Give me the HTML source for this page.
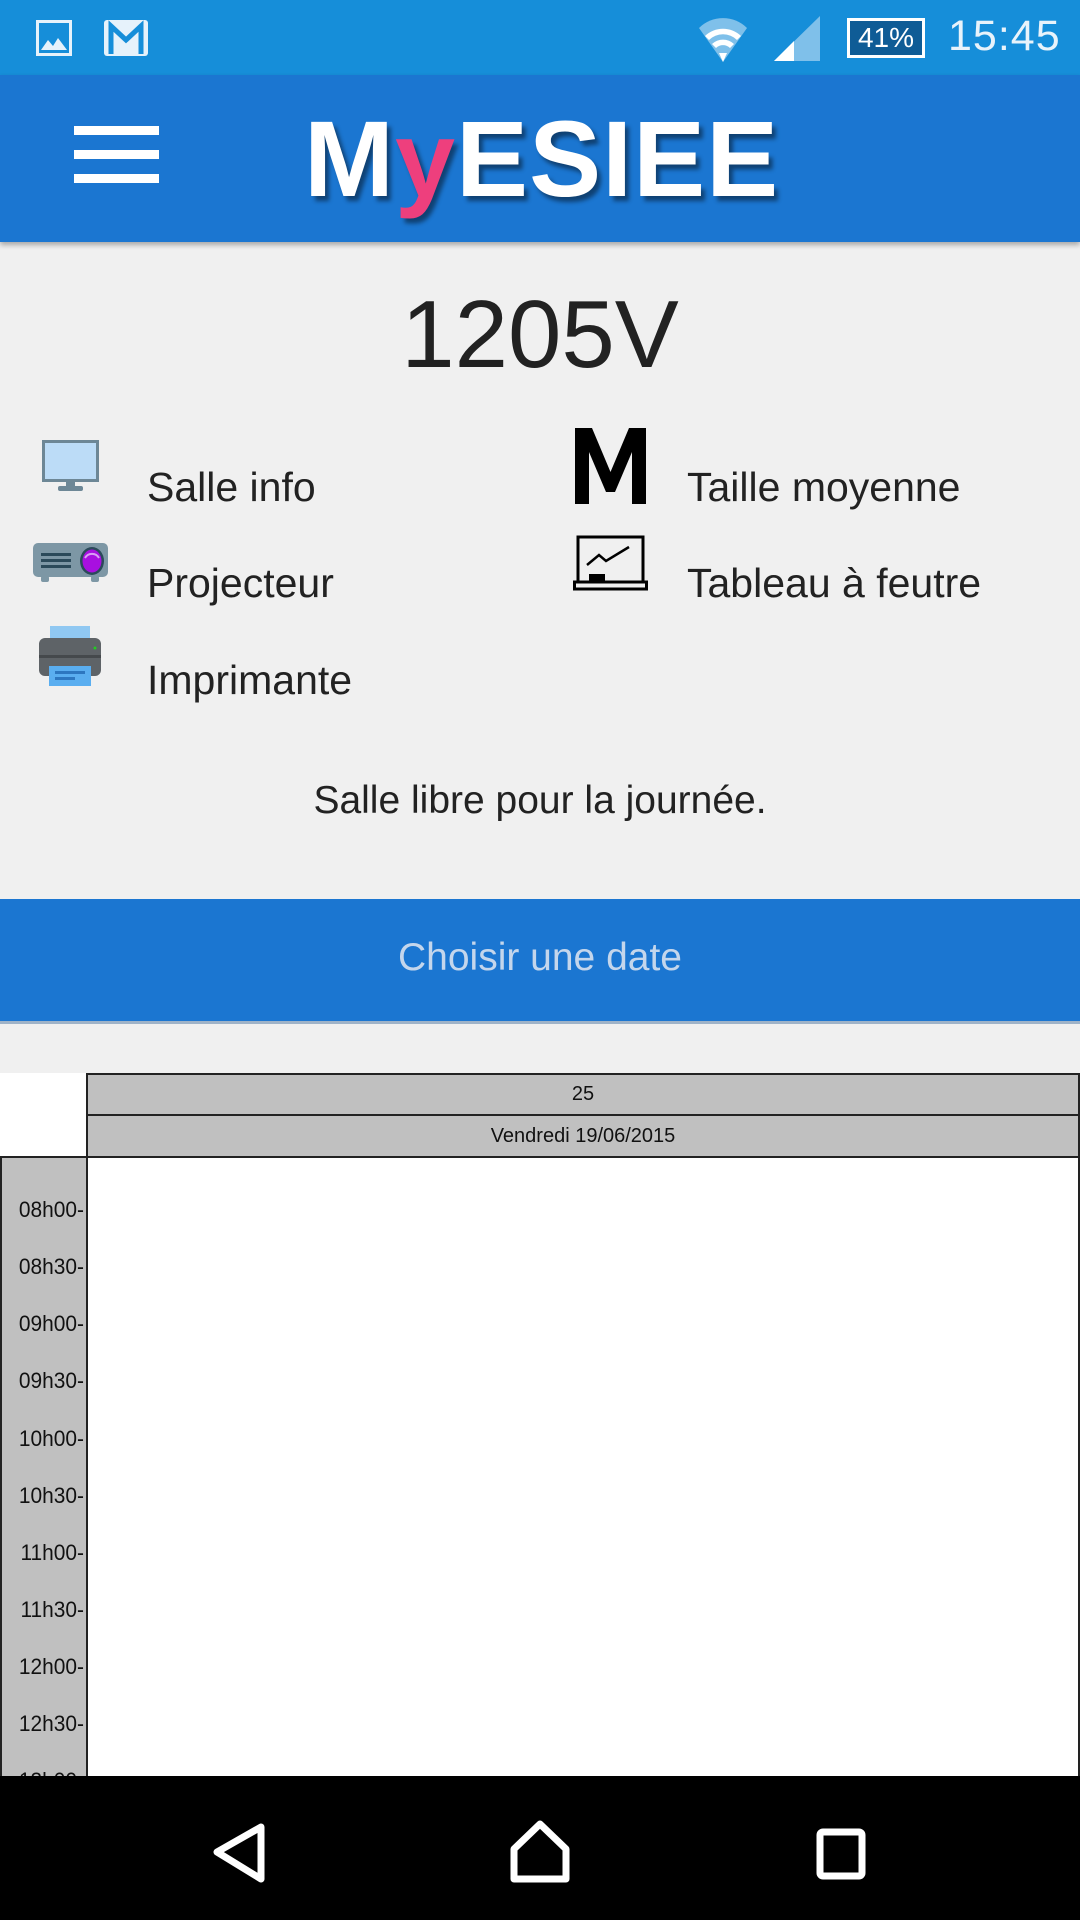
<!DOCTYPE html>
<html><head><meta charset="utf-8"><style>
*{margin:0;padding:0;box-sizing:border-box}
body{width:1080px;height:1920px;overflow:hidden;background:#f0f0f0;font-family:"Liberation Sans",sans-serif;position:relative}
.abs{position:absolute}
.t{font-size:41px;color:#222}
.time{position:absolute;left:0;width:84px;text-align:right;font-family:"Liberation Sans",sans-serif;font-size:22px;color:#111;transform:scaleX(0.95);transform-origin:right}
</style></head><body>
<div class="abs" style="left:0;top:0;width:1080px;height:75px;background:#168ed9"></div>
<svg class="abs" style="top:20px;left:36px" width="36" height="36" viewBox="0 0 36 36"><rect x="1.5" y="1.5" width="33" height="33" fill="none" stroke="#e6f2fb" stroke-width="3"/><path d="M5 30 L12 20 L17 26 L22 18 L31 30Z" fill="#e6f2fb"/></svg>
<svg class="abs" style="left:104px;top:20px" width="44" height="36" viewBox="0 0 44 36"><rect x="0" y="0" width="44" height="36" rx="3" fill="#e6f2fb"/><path d="M7 34 V6 L22 20 L37 6 V34" fill="none" stroke="#168ed9" stroke-width="5"/></svg>
<svg class="abs" style="left:697px;top:16px" width="52" height="48" viewBox="0 0 52 48"><path d="M2 12 A34 34 0 0 1 50 12 L26 46Z" fill="#7fc0ea"/><path d="M8 20 A26 26 0 0 1 44 20 L40 24 A20 20 0 0 0 12 24Z M15 28 A16 16 0 0 1 37 28 L33 32 A10 10 0 0 0 19 32Z" fill="#fff"/><path d="M22 37 L30 37 L26 46Z" fill="#fff"/></svg>
<svg class="abs" style="left:774px;top:16px" width="46" height="46" viewBox="0 0 46 46"><path d="M46 0 V45 H0Z" fill="#7fc0ea"/><path d="M0 45 L20 25 V45Z" fill="#fff"/></svg>
<div class="abs" style="left:847px;top:18px;width:78px;height:40px;border:3px solid #fff;background:#0f5c96;color:#fff;font-size:28px;text-align:center;line-height:34px">41%</div>
<div class="abs" style="left:948px;top:12px;font-size:43px;color:#e8f3fb;letter-spacing:1px">15:45</div>

<div class="abs" style="left:0;top:75px;width:1080px;height:167px;background:#1b76d1;box-shadow:0 3px 5px rgba(0,0,0,.3)"></div>
<div class="abs" style="left:74px;top:126px;width:85px;height:9px;background:#fff"></div>
<div class="abs" style="left:74px;top:150px;width:85px;height:9px;background:#fff"></div>
<div class="abs" style="left:74px;top:174px;width:85px;height:9px;background:#fff"></div>
<div class="abs" style="left:304px;top:96px;font-size:108px;font-weight:bold;color:#fff;letter-spacing:1px;text-shadow:4px 5px 4px rgba(0,0,0,.45)">M<span style="color:#ee3f7d">y</span>ESIEE</div>

<div class="abs" style="left:0;top:280px;width:1080px;text-align:center;font-size:96px;color:#222">1205V</div>

<svg class="abs" style="left:42px;top:440px" width="57" height="52" viewBox="0 0 57 52"><rect x="1.5" y="1.5" width="54" height="39" fill="#bcdcf7" stroke="#6d8796" stroke-width="3"/><rect x="24" y="40" width="9" height="6" fill="#6d8796"/><rect x="16" y="46" width="25" height="5" rx="2" fill="#6d8796"/></svg>
<svg class="abs" style="left:33px;top:543px" width="75" height="40" viewBox="0 0 75 40"><rect x="0" y="0" width="75" height="34" rx="5" fill="#7d97a5"/><rect x="8" y="33" width="8" height="6" rx="2" fill="#7d97a5"/><rect x="58" y="33" width="8" height="6" rx="2" fill="#7d97a5"/><ellipse cx="59" cy="18" rx="12" ry="14" fill="#2b4a5a"/><ellipse cx="59" cy="18" rx="9.5" ry="11.5" fill="#a810e0"/><path d="M52 15 A8 8 0 0 1 66 15" fill="none" stroke="#d9a0f5" stroke-width="2"/><g fill="#2b4a5a"><rect x="8" y="10" width="30" height="3"/><rect x="8" y="16" width="30" height="3"/><rect x="8" y="22" width="30" height="3"/></g></svg>
<svg class="abs" style="left:39px;top:626px" width="62" height="60" viewBox="0 0 62 60"><rect x="11" y="0" width="40" height="14" fill="#90c8f2"/><rect x="0" y="12" width="62" height="38" rx="6" fill="#5e6367"/><rect x="0" y="29" width="62" height="3" fill="#45494c"/><rect x="10" y="40" width="42" height="20" fill="#5aaef0"/><rect x="16" y="45" width="30" height="3" fill="#2d77c0"/><rect x="16" y="51" width="20" height="3" fill="#2d77c0"/><circle cx="56" cy="22" r="1.5" fill="#2c2"/></svg>
<div class="abs t" style="left:147px;top:464px">Salle info</div>
<div class="abs t" style="left:147px;top:560px">Projecteur</div>
<div class="abs t" style="left:147px;top:657px">Imprimante</div>

<svg class="abs" style="left:575px;top:428px" width="71" height="76" viewBox="0 0 71 76"><path d="M0 76 V0 H17 L35.5 44 L54 0 H71 V76 H57 V24 L40 64 H31 L14 24 V76Z" fill="#000"/></svg>
<svg class="abs" style="left:573px;top:535px" width="75" height="58" viewBox="0 0 75 58"><rect x="5" y="2" width="65" height="45" fill="none" stroke="#000" stroke-width="3"/><rect x="1.5" y="47" width="72" height="7" fill="none" stroke="#000" stroke-width="3"/><path d="M14 30 L26 20 L33 26 L56 12" fill="none" stroke="#000" stroke-width="2.5"/><rect x="16" y="39" width="16" height="8" fill="#000"/></svg>
<div class="abs t" style="left:687px;top:464px">Taille moyenne</div>
<div class="abs t" style="left:687px;top:560px">Tableau à feutre</div>

<div class="abs" style="left:0;top:779px;width:1080px;text-align:center;font-size:39px;color:#222">Salle libre pour la journée.</div>

<div class="abs" style="left:0;top:899px;width:1080px;height:125px;background:#1b76d1;border-bottom:3px solid #9fb3c8"></div>
<div class="abs" style="left:0;top:936px;width:1080px;text-align:center;font-size:39px;color:#c4d6ec">Choisir une date</div>

<div class="abs" style="left:0;top:1073px;width:1080px;height:703px;background:#fff"></div>
<div class="abs" style="left:86px;top:1073px;width:994px;height:43px;background:#c0c0c0;border:2px solid #222;text-align:center;font-size:20px;line-height:38px;color:#111">25</div>
<div class="abs" style="left:86px;top:1114px;width:994px;height:44px;background:#c0c0c0;border:2px solid #222;text-align:center;font-size:20px;line-height:40px;color:#111">Vendredi 19/06/2015</div>
<div class="abs" style="left:0;top:1156px;width:88px;height:640px;background:#c0c0c0;border:2px solid #222;border-bottom:none"></div>
<div class="abs" style="left:88px;top:1158px;width:992px;height:620px;background:#fff;border-right:2px solid #222"></div>
<div class="time" style="top:1197px">08h00-</div>
<div class="time" style="top:1254px">08h30-</div>
<div class="time" style="top:1311px">09h00-</div>
<div class="time" style="top:1368px">09h30-</div>
<div class="time" style="top:1426px">10h00-</div>
<div class="time" style="top:1483px">10h30-</div>
<div class="time" style="top:1540px">11h00-</div>
<div class="time" style="top:1597px">11h30-</div>
<div class="time" style="top:1654px">12h00-</div>
<div class="time" style="top:1711px">12h30-</div>
<div class="time" style="top:1768px">13h00-</div>

<div class="abs" style="left:0;top:1776px;width:1080px;height:144px;background:#000"></div>
<svg class="abs" style="left:0;top:1776px" width="1080" height="144" viewBox="0 0 1080 144"><path d="M261 51 L217 76 L261 103Z" fill="none" stroke="#fff" stroke-width="7" stroke-linejoin="round"/><path d="M540 48 L566 73 V103 H514 V73Z" fill="none" stroke="#fff" stroke-width="7" stroke-linejoin="round"/><rect x="820" y="56" width="42" height="44" rx="3" fill="none" stroke="#fff" stroke-width="7"/></svg>
</body></html>
